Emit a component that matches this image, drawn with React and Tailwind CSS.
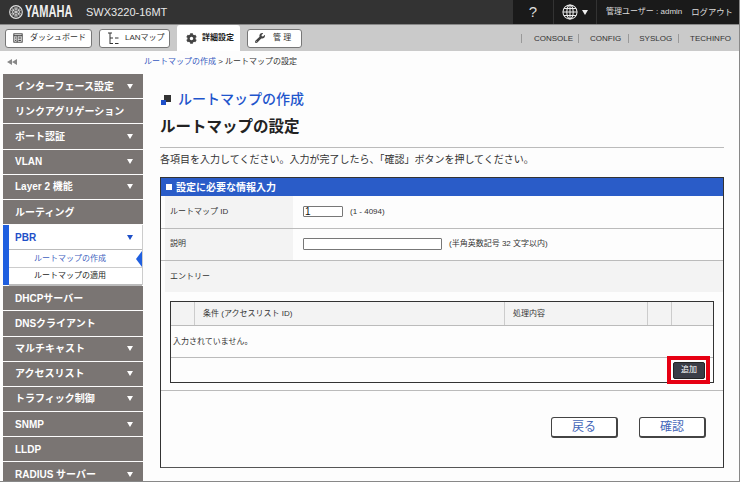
import React from "react";
import { FaCog, FaWrench } from "react-icons/fa";

const jp = "font-['Liberation_Sans','Noto_Sans_CJK_JP',sans-serif]";

function Tri({ className = "" }) {
  return (
    <svg width="6" height="5" viewBox="0 0 6 5" className={className}>
      <path d="M0 0H6L3 5Z" fill="currentColor" />
    </svg>
  );
}

function Logo() {
  const spokes = [0, 60, 120, 180, 240, 300];
  return (
    <svg width="14" height="14" viewBox="0 0 14 14" className="shrink-0">
      <circle cx="7" cy="7" r="6.3" fill="none" stroke="#ddd" strokeWidth="1.2" />
      {spokes.map((a) => (
        <g key={a} transform={`rotate(${a} 7 7)`}>
          <path d="M7 7V2.2M5.9 2.2V4.2H8.1V2.2" stroke="#ddd" strokeWidth="0.8" fill="none" />
        </g>
      ))}
    </svg>
  );
}

function Globe() {
  return (
    <svg width="16" height="16" viewBox="0 0 17 17" fill="none" stroke="#eee" strokeWidth="1.1">
      <circle cx="8.5" cy="8.5" r="7.5" />
      <ellipse cx="8.5" cy="8.5" rx="3.4" ry="7.5" />
      <path d="M8.5 1V16M1 8.5H16M2 4.8H15M2 12.2H15" />
    </svg>
  );
}

function Dash() {
  return (
    <svg width="10" height="10" viewBox="0 0 12 12" fill="none" stroke="#333" strokeWidth="1.1" className="shrink-0">
      <rect x="1" y="1" width="10" height="10" />
      <path d="M1 3.2H11M5 3.2V11M6.5 5H9.5M6.5 7H9.5M6.5 9H9.5M2.5 5H3.8M2.5 7H3.8M2.5 9H3.8" />
    </svg>
  );
}

function Lan() {
  return (
    <svg width="12" height="13" viewBox="0 0 12 13" fill="none" stroke="#333" strokeWidth="1" className="shrink-0">
      <path d="M1 1H5M3 1V12M3 6H6M3 11.5H6M8 6H11.5M8 11.5H11.5" />
    </svg>
  );
}

function TabBtn({ icon, label, w, active, gap = "gap-[7px]", pl = "pl-[7px]" }) {
  if (active) {
    return (
      <div className={`h-[26px] self-end bg-white rounded-t-[3px] flex items-center whitespace-nowrap ${w} pl-[9px] gap-[5px] text-[8px] font-bold text-[#222]`}>
        {icon}
        <span>{label}</span>
      </div>
    );
  }
  return (
    <div className={`h-[19px] bg-white border border-[#777] rounded-[3px] flex items-center whitespace-nowrap ${w} ${pl} ${gap} text-[8px] text-[#333]`}>
      {icon}
      <span>{label}</span>
    </div>
  );
}

const menu = [
  ["インターフェース設定", true],
  ["リンクアグリゲーション", false],
  ["ポート認証", true],
  ["VLAN", true],
  ["Layer 2 機能", true],
  ["ルーティング", false],
  ["PBR", "open"],
  ["DHCPサーバー", false],
  ["DNSクライアント", false],
  ["マルチキャスト", true],
  ["アクセスリスト", true],
  ["トラフィック制御", true],
  ["SNMP", true],
  ["LLDP", false],
  ["RADIUS サーバー", true],
];

function Sidebar() {
  return (
    <div className="w-[143px] shrink-0 pl-[3px] overflow-hidden">
      <div className="h-[23px] pl-[4px] pt-[8px] flex items-start">
        <svg width="10" height="6" viewBox="0 0 10 6"><path d="M5 0V6L0 3ZM10 0V6L5 3Z" fill="#888" /></svg>
      </div>
      {menu.map(([label, arrow]) =>
        arrow === "open" ? (
          <div key={label} className="h-[60px] border-r border-[#ccc] border-l-[6px] border-l-[#1f5fe0] bg-white mb-px">
            <div className="h-[25px] flex items-center justify-between pl-[6px] pr-[9px] text-[10px] font-bold text-[#1f50c8] border-b border-[#bbb]">
              <span>{label}</span>
              <Tri />
            </div>
            <div className="h-[18px] relative flex items-center pl-[25px] text-[8px] text-[#3f5fc0] border-b border-[#ccc]">
              ルートマップの作成
              <svg width="6" height="16" viewBox="0 0 6 16" className="absolute right-0 top-[1px]"><path d="M6 0V16L0 8Z" fill="#1f5fe0" /></svg>
            </div>
            <div className="h-[16px] flex items-center pl-[25px] text-[8px] text-[#222] border-b-[3px] border-[#bbb] box-content">
              ルートマップの適用
            </div>
          </div>
        ) : (
          <div key={label} className="h-[24.2px] mb-px bg-[#7a7573] flex items-center justify-between pl-[12px] pr-[10px] text-[10px] font-bold text-white">
            <span>{label}</span>
            {arrow && <Tri />}
          </div>
        )
      )}
    </div>
  );
}

function Row({ label, children }) {
  return (
    <div className="flex h-[32.5px] border-b border-[#bbb] pl-[4px]">
      <div className="w-[128px] bg-[#f3f3f3] flex items-center pl-[5px] text-[8px] text-[#333]">{label}</div>
      <div className="flex-1 flex items-center pl-[10px] gap-[7px] text-[8px] text-[#333]">{children}</div>
    </div>
  );
}

function Main() {
  return (
    <div className="flex-1 min-w-0 pr-[15px] pl-[17px]">
      <div className="h-[23px] -ml-[16px] pt-[4px] text-[8px] leading-[14px] text-[#333]">
        <span className="text-[#3558c0]">ルートマップの作成</span> &gt; ルートマップの設定
      </div>
      <div className="flex items-center gap-[6px] h-[18px] mt-[16px] pl-[1px]">
        <svg width="11" height="11" viewBox="0 0 11 11"><rect x="3" y="1" width="7" height="7" fill="#333" /><rect x="0" y="6" width="5" height="5" fill="#1f50c8" /></svg>
        <span className="text-[14px] font-medium text-[#1f55cc]">ルートマップの作成</span>
      </div>
      <div className="mt-[9px] h-[20px] flex items-center text-[15.5px] font-bold text-[#222]">ルートマップの設定</div>
      <div className="border-b border-[#bbb] h-[11px]" />
      <div className="h-[22px] mb-[7px] flex items-center text-[10px] text-[#333] whitespace-nowrap">
        各項目を入力してください。入力が完了したら、「確認」ボタンを押してください。
      </div>
      <div className="border border-[#333] h-[291px] border-b-[#555]">
        <div className="h-[18px] bg-[#2a5cc8] flex items-center pl-[5px] gap-[4px] text-[10px] font-bold text-white">
          <span className="w-[6px] h-[6px] bg-white" />
          設定に必要な情報入力
        </div>
        <Row label="ルートマップ ID">
          <div className="w-[40px] h-[11px] border border-[#777] rounded-[1px] flex items-center pl-[1px] text-[10px] text-[#111] bg-white">1</div>
          <span>(1 - 4094)</span>
        </Row>
        <Row label="説明">
          <div className="w-[139px] h-[12px] border border-[#777] rounded-[1px] bg-white" />
          <span>(半角英数記号 32 文字以内)</span>
        </Row>
        <div className="ml-[4px] h-[31px] bg-[#f3f3f3] flex items-center pl-[5px] text-[8px] text-[#333]">エントリー</div>
        <div className="ml-[9px] mr-[9px] mt-[9px] h-[82px] border border-[#333] relative">
          <div className="h-[24px] bg-[#f3f3f3] border-b border-[#bbb] flex text-[8px] text-[#333]">
            <div className="w-[24px] border-r border-[#ccc]" />
            <div className="w-[310px] border-r border-[#ccc] flex items-center pl-[8px]">条件 (アクセスリスト ID)</div>
            <div className="w-[143px] border-r border-[#ccc] flex items-center pl-[8px]">処理内容</div>
            <div className="w-[24px] border-r border-[#ccc]" />
          </div>
          <div className="h-[32px] border-b border-[#bbb] flex items-center pl-[2px] text-[8px] text-[#333]">入力されていません。</div>
          <div className="h-[24px] flex justify-end items-center pr-[8px]">
            <div className="w-[32px] h-[17px] bg-[#3a3d47] rounded-[2px] flex items-center justify-center text-[8px] text-white border border-[#222]">追加</div>
          </div>
          <div className="absolute right-[3px] top-[54px] w-[43px] h-[28px] border-[4px] border-[#e60012]" />
        </div>
        <div className="border-b border-[#bbb] h-[8px]" />
        <div className="flex justify-end gap-[21px] mt-[26px] pr-[17px]">
          <div className="w-[67px] h-[21px] border border-[#444] border-b-2 border-r-2 rounded-[3px] bg-white flex items-center justify-center text-[12px] text-[#4466b8]">戻る</div>
          <div className="w-[67px] h-[21px] border border-[#444] border-b-2 border-r-2 rounded-[3px] bg-white flex items-center justify-center text-[12px] text-[#4466b8]">確認</div>
        </div>
      </div>
    </div>
  );
}

export default function App() {
  return (
    <div className={`w-[740px] h-[482px] overflow-hidden flex flex-col bg-[#fdfdfd] border-r border-b border-[#888] ${jp}`}>
      <header className="h-[24px] shrink-0 bg-[#333333] flex items-center text-white">
        <div className="flex items-center pl-[9px] flex-1">
          <Logo />
          <div className="w-[48px] ml-[2px]">
            <span className="inline-block origin-left scale-x-[0.65] font-bold text-[17px] leading-[20px] text-[#eee]">YAMAHA</span>
          </div>
          <span className="ml-[13px] text-[11px] text-[#e8e8e8]">SWX3220-16MT</span>
        </div>
        <div className="h-full w-[41px] bg-[#1a1a1a] flex items-center justify-center text-[15px] text-[#ddd] border-r border-[#333]">?</div>
        <div className="h-full w-[43px] bg-[#1a1a1a] flex items-center justify-center gap-[4px] text-[#eee] border-r border-[#333]">
          <Globe />
          <Tri />
        </div>
        <div className="h-full w-[142px] bg-[#1a1a1a] flex items-center gap-[9px] pl-[9px] text-[8px] text-[#ddd] whitespace-nowrap">
          <span>管理ユーザー : admin</span>
          <span className="text-[8.3px]">ログアウト</span>
        </div>
      </header>
      <nav className="h-[27px] shrink-0 bg-[#cacaca] border-t border-[#888] flex items-center pl-[5px] text-[#333]">
        <div className="flex items-center gap-[7px] h-full">
          <TabBtn w="w-[87px]" icon={<Dash />} label="ダッシュボード" />
          <TabBtn w="w-[71px]" gap="gap-[6px]" icon={<Lan />} label="LANマップ" />
          <TabBtn w="w-[63px]" active icon={<FaCog size={11} color="#444" />} label="詳細設定" />
          <TabBtn w="w-[55px]" gap="gap-[8px]" icon={<FaWrench size={10} color="#444" />} label="管 理" />
        </div>
        <div className="ml-auto flex items-center text-[8px] text-[#333] pr-[8px]">
          <span className="pl-[12px] pr-[5px] border-l border-[#999] leading-[9px]">CONSOLE</span>
          <span className="pl-[11px] pr-[7px] border-l border-[#999] leading-[9px]">CONFIG</span>
          <span className="pl-[10px] pr-[6px] border-l border-[#999] leading-[9px]">SYSLOG</span>
          <span className="pl-[11px] border-l border-[#999] leading-[9px]">TECHINFO</span>
        </div>
      </nav>
      <div className="flex flex-1 min-h-0 overflow-hidden">
        <Sidebar />
        <Main />
      </div>
    </div>
  );
}
